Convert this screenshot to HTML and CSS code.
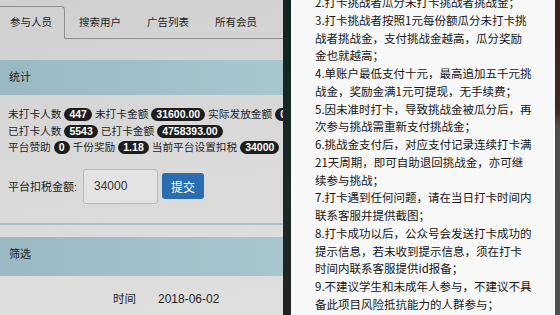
FILE: index.html
```html
<!DOCTYPE html>
<html lang="zh-CN">
<head>
  <meta charset="UTF-8">
  <title>参与人员</title>
  <link rel="stylesheet" href="styles.css">
</head>
<body>
<div class="shot">
  <div class="admin">
    <div class="tabs">
      <div class="tab active">参与人员</div>
      <div class="tab">搜索用户</div>
      <div class="tab">广告列表</div>
      <div class="tab">所有会员</div>
    </div>

    <div class="panel-title first">统计</div>
    <div class="stats">
      <div class="stat-row">未打卡人数 <span class="badge">447</span> 未打卡金额 <span class="badge">31600.00</span> 实际发放金额 <span class="badge">0</span></div>
      <div class="stat-row">已打卡人数 <span class="badge">5543</span> 已打卡金额 <span class="badge">4758393.00</span></div>
      <div class="stat-row">平台赞助 <span class="badge">0</span> 千份奖励 <span class="badge">1.18</span> 当前平台设置扣税 <span class="badge">34000</span></div>
    </div>

    <form class="tax-form">
      <label for="tax">平台扣税金额:</label>
      <input id="tax" type="text" value="34000">
      <button type="button" class="submit-btn">提交</button>
    </form>

    <div class="panel-title second">筛选</div>
    <div class="filter-row">
      <span>时间</span>
      <span class="date">2018-06-02</span>
    </div>
  </div>

  <div class="bezel"></div>

  <div class="phone">
    <div class="rules">
      <p>2.打卡挑战者瓜分未打卡挑战者挑战金；</p>
      <p>3.打卡挑战者按照1元每份额瓜分未打卡挑<br>战者挑战金，支付挑战金越高，瓜分奖励<br>金也就越高；</p>
      <p>4.单账户最低支付十元，最高追加五千元挑<br>战金，奖励金满1元可提现，无手续费；</p>
      <p>5.因未准时打卡，导致挑战金被瓜分后，再<br>次参与挑战需重新支付挑战金；</p>
      <p>6.挑战金支付后，对应支付记录连续打卡满<br>21天周期，即可自助退回挑战金，亦可继<br>续参与挑战；</p>
      <p>7.打卡遇到任何问题，请在当日打卡时间内<br>联系客服并提供截图；</p>
      <p>8.打卡成功以后，公众号会发送打卡成功的<br>提示信息，若未收到提示信息，须在打卡<br>时间内联系客服提供id报备；</p>
      <p>9.不建议学生和未成年人参与，不建议不具<br>备此项目风险抵抗能力的人群参与；</p>
    </div>
  </div>

  <div class="edge"></div>
</div>
</body>
</html>
```

FILE: styles.css
```css
body {
  margin: 0;
  background: #333;
}

.shot {
  display: flex;
  width: 560px;
  height: 315px;
  overflow: hidden;
}

/* left: admin page */
.admin {
  width: 283px;
  flex: none;
  overflow: hidden;
  background: linear-gradient(170deg, #cfcfcf 0%, #d9d9d9 45%, #dfdfde 100%);
  font-family: "Liberation Sans", "Noto Sans CJK SC", sans-serif;
  font-size: 10.7px;
  color: #1e1e1e;
}

.tabs {
  display: flex;
  align-items: flex-end;
  height: 38px;
  border-bottom: 1px solid #8f8f8f;
  white-space: nowrap;
}

.tab {
  padding: 0 12px;
  margin-right: 2px;
  height: 31px;
  line-height: 31px;
  font-size: 10.5px;
  flex: none;
}

.tab.active {
  padding-left: 10px;
  border: 1px solid #8f8f8f;
  border-left: none;
  border-bottom-color: #d1d1d1;
  border-radius: 0 4px 0 0;
  margin-bottom: -1px;
  background: #d1d1d1;
}

.panel-title {
  background: linear-gradient(90deg, #9bb9c2, #a8c6ce);
  padding-left: 9px;
  font-size: 11px;
}

.panel-title.first {
  margin-top: 21px;
  height: 35px;
  line-height: 35px;
}

.panel-title.second {
  margin-top: 12px;
  height: 39px;
  line-height: 35px;
}

.stats {
  margin-top: 11px;
  padding-left: 8px;
  white-space: nowrap;
}

.stat-row {
  line-height: 16.5px;
}

.badge {
  display: inline-block;
  background: #1d1d1d;
  color: #fff;
  font-weight: bold;
  font-size: 10.5px;
  line-height: 13px;
  padding: 0 5px;
  border-radius: 7px;
}

.tax-form {
  display: flex;
  align-items: center;
  margin: 13px 0 0;
  padding: 0 0 19px 8px;
  border-bottom: 2px solid #aac0c8;
}

.tax-form label {
  width: 75px;
  font-size: 11px;
}

.tax-form input {
  width: 75px;
  height: 35px;
  box-sizing: border-box;
  padding-left: 10px;
  border: 1px solid #b8b8b8;
  border-radius: 3px;
  background: #e3e3e3;
  font-family: "Liberation Sans", sans-serif;
  font-size: 12px;
  color: #333;
}

.submit-btn {
  margin-left: 4px;
  width: 42px;
  height: 26px;
  border: none;
  border-radius: 3px;
  background: #2b6db1;
  color: #fff;
  font-family: "Noto Sans CJK SC", sans-serif;
  font-size: 12px;
}

.filter-row {
  display: flex;
  gap: 22px;
  padding: 15px 0 0 113px;
  font-size: 11.5px;
  line-height: 16px;
}

.date {
  font-size: 12px;
}

/* middle / right: phone */
.bezel {
  width: 8px;
  flex: none;
  background: linear-gradient(180deg, #0f2420, #1b2a27 60%, #222);
}

.phone {
  width: 264px;
  flex: none;
  background: #f8f8f8;
  overflow: hidden;
}

.rules {
  margin-top: -6px;
  padding-left: 24px;
  font-family: "Noto Sans CJK SC", sans-serif;
  font-size: 11.5px;
  line-height: 17.75px;
  color: #161616;
  white-space: nowrap;
}

.rules p {
  margin: 0;
}

.edge {
  flex: 1;
  background: linear-gradient(180deg, #3b2116 0%, #3f2a20 35%, #4c4c4c 40%, #505050 100%);
}
```
